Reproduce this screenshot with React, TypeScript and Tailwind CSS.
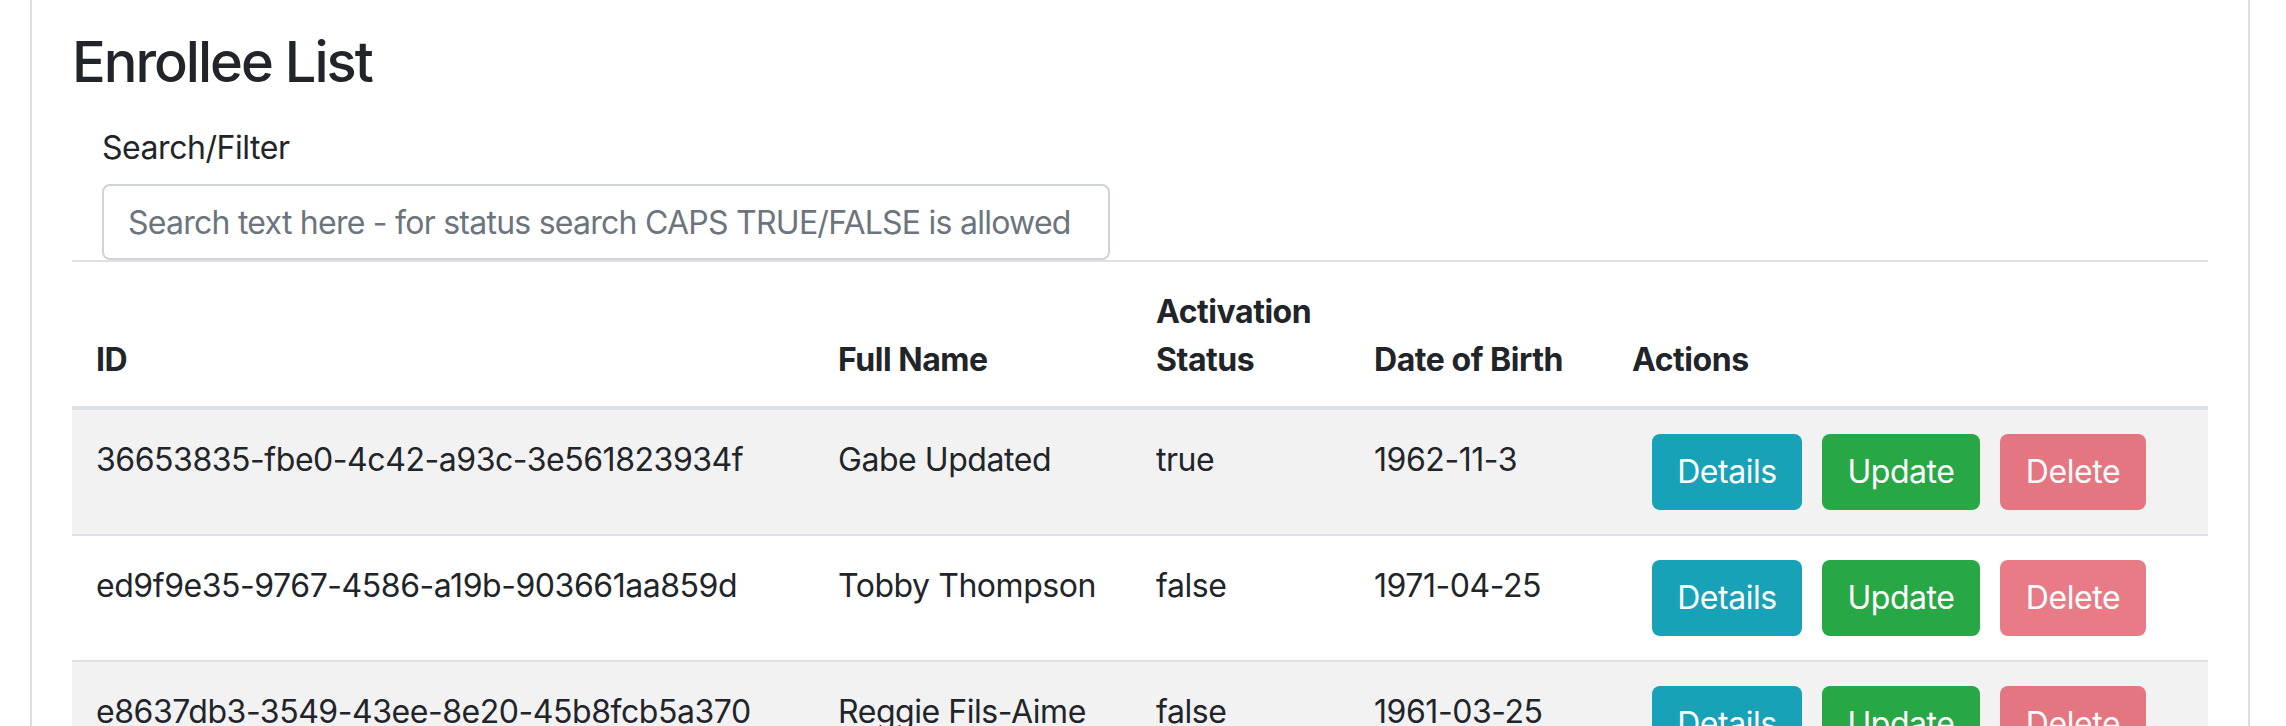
const enrollees = [
  { id: "36653835-fbe0-4c42-a93c-3e561823934f", name: "Gabe Updated", active: "true", dob: "1962-11-3" },
  { id: "ed9f9e35-9767-4586-a19b-903661aa859d", name: "Tobby Thompson", active: "false", dob: "1971-04-25" },
  { id: "e8637db3-3549-43ee-8e20-45b8fcb5a370", name: "Reggie Fils-Aime", active: "false", dob: "1961-03-25" },
];

function ActionButton({ label, className }: { label: string; className: string }) {
  return (
    <button
      type="button"
      className={`ml-[20px] flex h-[76px] items-center justify-center rounded-[8px] text-[32px] leading-[48px] text-white ${className}`}
    >
      {label}
    </button>
  );
}

export default function App() {
  const th = "border-t-2 border-b-4 border-[#dee2e6] px-[24px] pt-[26px] pb-[22px] text-left align-bottom font-bold";

  return (
    <div
      className="min-h-[726px] bg-white pl-[30px] pr-[36px] text-[32px] leading-[48px] tracking-[-0.45px] text-[#212529]"
      style={{ fontFamily: "Inter, 'Liberation Sans', sans-serif" }}
    >
      <div className="min-h-[726px] border-x-2 border-[#dfdfdf] px-[40px] pt-[29px]">
        <h3 className="text-[56px] font-medium leading-[67px] tracking-[-2px]">Enrollee List</h3>

        <div className="mt-[28px] pl-[30px]">
          <label className="mb-[12px] block">Search/Filter</label>
          <input
            type="text"
            placeholder="Search text here - for status search CAPS TRUE/FALSE is allowed"
            className="h-[76px] w-[1008px] rounded-[8px] border-2 border-[#ced4da] bg-white px-[24px] text-[32px] tracking-[-0.75px] text-[#495057] placeholder:text-[#6c757d] focus:outline-none"
          />
        </div>

        <table className="w-full table-fixed border-separate border-spacing-0">
          <colgroup>
            <col className="w-[742px]" />
            <col className="w-[318px]" />
            <col className="w-[218px]" />
            <col className="w-[258px]" />
            <col className="w-[600px]" />
          </colgroup>
          <thead>
            <tr>
              <th className={th}>ID</th>
              <th className={th}>Full Name</th>
              <th className={th}>Activation Status</th>
              <th className={th}>Date of Birth</th>
              <th className={th}>Actions</th>
            </tr>
          </thead>
          <tbody>
            {enrollees.map((e, i) => {
              const border = `border-[#dee2e6] ${i > 0 ? "border-t-2" : ""}`;
              const td = `px-[24px] pt-[26px] pb-[22px] align-top ${border}`;
              return (
                <tr key={e.id} className={i % 2 === 0 ? "bg-[#f2f2f2]" : "bg-white"}>
                  <td className={td}>{e.id}</td>
                  <td className={td}>{e.name}</td>
                  <td className={td}>{e.active}</td>
                  <td className={td}>{e.dob}</td>
                  <td className={`p-[24px] align-top ${border}`}>
                    <div className="flex">
                      <ActionButton label="Details" className="w-[150px] bg-[#17a2b8]" />
                      <ActionButton label="Update" className="w-[158px] bg-[#28a745]" />
                      <ActionButton label="Delete" className="w-[146px] bg-[#dc3545] opacity-65" />
                    </div>
                  </td>
                </tr>
              );
            })}
          </tbody>
        </table>
      </div>
    </div>
  );
}
